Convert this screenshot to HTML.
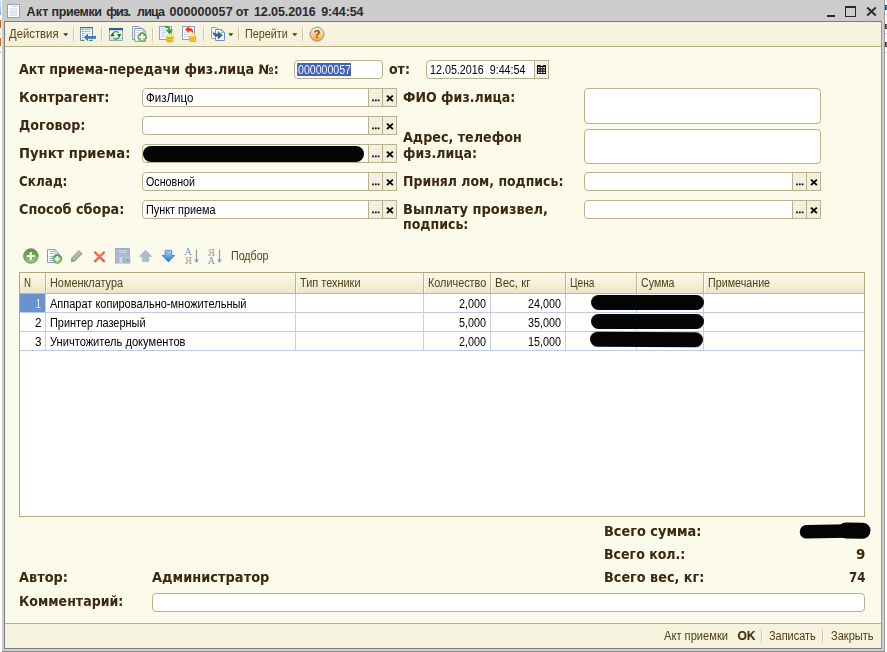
<!DOCTYPE html>
<html lang="ru"><head><meta charset="utf-8"><title>Акт приемки физ. лица</title>
<style>
*{box-sizing:border-box;margin:0;padding:0}
html,body{width:887px;height:652px;overflow:hidden;background:#fff}
body{position:relative;font-family:"Liberation Sans",sans-serif;font-size:11px;color:#000}
.a,.t,svg{position:absolute}
.t{white-space:pre;line-height:20px;height:20px}
.lb{font:bold 13.2px "DejaVu Sans",sans-serif;line-height:20px;transform-origin:0 0}
.tt{font:bold 12.5px "Liberation Sans",sans-serif;line-height:20px}
.r{font:12px "Liberation Sans",sans-serif;line-height:20px;transform-origin:0 0}
.ok{font:bold 12px "Liberation Sans",sans-serif;line-height:20px}
#frame{left:2px;top:0;width:883px;height:652px;background:#cdcdcd;border-right:1px solid #9c9c9c;border-bottom:1px solid #8c8c8c}
#inner{left:4px;top:21px;width:878px;height:628px;border:1px solid #7d7d7d;border-right-color:#9a9a9a;background:#fcfaeb}
#tb{left:5px;top:22px;width:876px;height:25px;background:linear-gradient(#f7f4e1,#f4f1db);border-bottom:1px solid #b9ae84}
#sb{left:5px;top:623px;width:876px;height:25px;background:#f5f2dd;border-top:1px solid #b9ae84}
.sep{width:2px;background:linear-gradient(rgba(205,196,158,0),#cdc49e 30%,#cdc49e 70%,rgba(205,196,158,0)) left/1px 100% no-repeat,linear-gradient(rgba(255,255,255,0),#fff 30%,#fff 70%,rgba(255,255,255,0)) right/1px 100% no-repeat}
.inp{background:#fff;border:1px solid #b9b08c;border-radius:4px;height:19px}
.bt{background:#f3f0e0;border:1px solid #b9b08c;height:19px;width:15px}
.dots{width:1px;height:1px;background:#222;box-shadow:2px 0 #222,4px 0 #222}
.dd{width:0;height:0;border-left:2.600px solid transparent;border-right:2.600px solid transparent;border-top:3px solid #4a3a12}
.blk{background:#050505;border-radius:9px;filter:blur(.45px)}
#tbl{left:19px;top:272px;width:846px;height:245px;border:1px solid #b0a782;background:#fff}
#th{left:20px;top:273px;width:844px;height:21px;background:linear-gradient(#fbf8e8,#f6f1db 50%,#ebe4c6);border-bottom:1px solid #c0b791}
.hs{top:273px;width:2px;height:20px;background:linear-gradient(90deg,#bdb48e 50%,#fffdf2 50%)}
.vs{top:294px;width:1px;height:56px;background:#c3d0e8}
.hl{left:20px;width:844px;height:1px;background:#bccbe6}
</style></head><body>
<div id="frame" class="a"></div>
<div class="a" style="left:0;top:0;width:2px;height:652px;background:#fff"></div>
<div class="a" style="left:0;top:0;width:1px;height:15px;background:linear-gradient(#cfe2f8,#7fb0ee)"></div>
<div class="a" style="left:0;top:20px;width:1px;height:8px;background:#c8641e"></div><div class="a" style="left:0;top:33px;width:1px;height:1px;background:#aaa"></div><div class="a" style="left:0;top:52px;width:1px;height:1px;background:#aaa"></div>
<div class="a" style="left:0;top:38px;width:1px;height:8px;background:#c8641e"></div>
<div class="a" style="left:885px;top:5px;width:2px;height:5px;background:#7a2a18"></div><div class="a" style="left:886px;top:6px;width:1px;height:3px;background:#3f8de8"></div><div class="a" style="left:885px;top:24px;width:2px;height:5px;background:#7a2a18"></div><div class="a" style="left:886px;top:25px;width:1px;height:3px;background:#3f8de8"></div><div class="a" style="left:885px;top:42px;width:2px;height:5px;background:#7a2a18"></div><div class="a" style="left:886px;top:43px;width:1px;height:3px;background:#3f8de8"></div><div class="a" style="left:885px;top:14px;width:2px;height:1px;background:#c9daf2"></div><div class="a" style="left:885px;top:33px;width:2px;height:1px;background:#c9daf2"></div><div class="a" style="left:885px;top:52px;width:2px;height:1px;background:#c9daf2"></div>
<div id="inner" class="a"></div>
<div id="tb" class="a"></div>
<div id="sb" class="a"></div>

<!-- title icon -->
<svg style="left:7px;top:4px" width="13" height="14" viewBox="0 0 13 14"><rect x=".5" y=".5" width="12" height="13" fill="#fdfeff" stroke="#8fa1b5"/><path d="M5.500 2.500h5M2.500 5h8M2.500 7.200h8M2.500 9.200h8M2.500 11.200h8" stroke="#bfd2e8" stroke-width="1"/></svg>
<!-- window controls -->
<div class="a" style="left:827px;top:15px;width:8px;height:2px;background:#2a2a2a"></div>
<div class="a" style="left:845px;top:6px;width:11px;height:11px;border:1px solid #2a2a2a;border-top-width:2px"></div>
<svg style="left:866px;top:6px" width="11" height="11" viewBox="0 0 11 11"><path d="M1.200 1.500l8.600 8M9.800 1.500l-8.600 8" stroke="#2a2a2a" stroke-width="1.900"/></svg>

<!-- toolbar -->
<svg style="left:62.5px;top:33px" width="6" height="4" viewBox="0 0 6 4"><path d="M.2 .3h5.200l-2.600 3z" fill="#4a3a12"/></svg>
<div class="a sep" style="left:73px;top:25px;height:19px"></div>
<div class="a sep" style="left:101px;top:25px;height:19px"></div>
<div class="a sep" style="left:152px;top:25px;height:19px"></div>
<div class="a sep" style="left:203px;top:25px;height:19px"></div>
<svg style="left:228.2px;top:33px" width="6" height="4" viewBox="0 0 6 4"><path d="M.2 .3h5.200l-2.600 3z" fill="#4a3a12"/></svg>
<div class="a sep" style="left:238px;top:25px;height:19px"></div>
<svg style="left:292px;top:33px" width="6" height="4" viewBox="0 0 6 4"><path d="M.2 .3h5.200l-2.600 3z" fill="#4a3a12"/></svg>
<div class="a sep" style="left:302px;top:25px;height:19px"></div>
<!-- tb icon1: list with arrow -->
<svg style="left:79px;top:25px" width="19" height="18" viewBox="79 25 19 18">
<path d="M80.500 40.300V27.800h12v8" fill="none" stroke="#6a93c0"/>
<rect x="81" y="28.300" width="11" height="12" fill="#fbfdff"/>
<path d="M80 27.600h13" stroke="#3b6a9c" stroke-width="1.200"/>
<path d="M80.500 40.300h4M89 40.300h3.900" stroke="#41597a" stroke-width="1"/>
<path d="M82 29.500h1.500M82 31.500h1.500M82 33.500h1.500M82 35.500h1.500M82 37.500h1" stroke="#4a8ad2"/>
<path d="M84.500 29.500h6M84.500 31.500h6M84.500 33.500h2M88.500 33.500h2" stroke="#a9b6c6"/>
<path d="M83.700 37.300l4.300-3.800v2.500h8v2.700h-8v2.600z" fill="#3579ba"/>
<path d="M88 36.300h7.800" stroke="#62a0d6" stroke-width=".6"/>
</svg>
<!-- tb icon2: refresh window -->
<svg style="left:108px;top:27px" width="16" height="15" viewBox="108 27 16 15">
<rect x="109.500" y="28.500" width="13" height="12" fill="#eef3f9" stroke="#96a8c0"/>
<rect x="110" y="37" width="12" height="3" fill="#d4e2f2"/>
<rect x="109" y="28" width="14" height="2.200" fill="#2f6093"/>
<path d="M112.800 34a3.400 3.200 0 0 1 5.800-1.300" fill="none" stroke="#4a9a3a" stroke-width="1.300"/>
<path d="M119.200 36.600a3.400 3.200 0 0 1-5.800 1.500" fill="none" stroke="#4a9a3a" stroke-width="1.300"/>
<path d="M110.200 36.300l2.300-3.500l2.300 3.500z" fill="#1d6a10"/>
<path d="M117 34l2.200 3.400l2.200-3.400z" fill="#1d6a10"/>
</svg>
<!-- tb icon3: copy plus -->
<svg style="left:131px;top:25px" width="17" height="18" viewBox="131 25 17 18">
<path d="M132.500 26.500h6.500l2 2v11h-8.500z" fill="#f3f6fb" stroke="#8c9db8"/>
<path d="M134.700 28.500h8l2.800 2.800v10h-10.800z" fill="#fbfdff" stroke="#8196b4"/>
<path d="M142.700 28.500v2.800h2.800" fill="none" stroke="#8196b4" stroke-width=".7"/>
<path d="M136.500 30.500h4.500M136.500 32.500h2" stroke="#bcc8d8"/>
<circle cx="142.200" cy="37" r="4.400" fill="url(#gg)" stroke="#85957f" stroke-width=".9"/>
<path d="M142.200 34v6M139.200 37h6" stroke="#fff" stroke-width="2.100"/>
</svg>
<!-- tb icon4: doc green arrow coins -->
<svg style="left:158px;top:25px" width="17" height="18" viewBox="158 25 17 18">
<rect x="159.500" y="26.500" width="12" height="13" fill="#f8fbfe" stroke="#86a2c6"/>
<path d="M161 28.500h4M161 30.500h5M161 32.500h5M161 34.500h4M161 36.700h4" stroke="#c3d3e6" stroke-width="1"/>
<path d="M165 26.800c2.800-.3 4.400 .8 4.500 3.400" fill="none" stroke="#3f9f30" stroke-width="2"/><path d="M165.700 29.700h7.400l-3.700 4.600z" fill="#379527"/><path d="M167.200 30.300h4.400" stroke="#6dc058" stroke-width=".6"/>
<g><ellipse cx="169.8" cy="40.85" rx="3.500" ry="1.400" fill="#e9ad18" stroke="#cf9a12" stroke-width=".4"/><ellipse cx="169.8" cy="40.3" rx="3.300" ry="1.050" fill="#ffe15a"/><ellipse cx="169.8" cy="39.25" rx="3.500" ry="1.400" fill="#e9ad18" stroke="#cf9a12" stroke-width=".4"/><ellipse cx="169.8" cy="38.7" rx="3.300" ry="1.050" fill="#ffe15a"/><ellipse cx="169.8" cy="37.65" rx="3.500" ry="1.400" fill="#e9ad18" stroke="#cf9a12" stroke-width=".4"/><ellipse cx="169.8" cy="37.1" rx="3.300" ry="1.050" fill="#ffe15a"/><ellipse cx="169.8" cy="36.15" rx="3.500" ry="1.400" fill="#e9ad18" stroke="#cf9a12" stroke-width=".4"/><ellipse cx="169.8" cy="35.7" rx="3.300" ry="1.150" fill="#fff0a0"/></g>
</svg>
<!-- tb icon5: doc red arrow coins -->
<svg style="left:181px;top:25px" width="17" height="18" viewBox="181 25 17 18">
<rect x="182.500" y="26.500" width="12" height="13" fill="#f8fbfe" stroke="#86a2c6"/>
<path d="M184 32.500h2.500M184 34.500h5M184 36.700h5" stroke="#c3d3e6" stroke-width="1"/>
<path d="M185 29.300l3.900-3.300v2.100c3.300-.1 4.800 2 4.200 5.700c-.7-2-1.900-2.800-4.200-2.700v2.100z" fill="#e83a22"/>
<path d="M186.200 29.200l2.400-2" stroke="#f58a78" stroke-width=".6"/>
<g><ellipse cx="192.7" cy="40.55" rx="3.500" ry="1.400" fill="#e9ad18" stroke="#cf9a12" stroke-width=".4"/><ellipse cx="192.7" cy="40" rx="3.300" ry="1.050" fill="#ffe15a"/><ellipse cx="192.7" cy="38.95" rx="3.500" ry="1.400" fill="#e9ad18" stroke="#cf9a12" stroke-width=".4"/><ellipse cx="192.7" cy="38.4" rx="3.300" ry="1.050" fill="#ffe15a"/><ellipse cx="192.7" cy="37.35" rx="3.500" ry="1.400" fill="#e9ad18" stroke="#cf9a12" stroke-width=".4"/><ellipse cx="192.7" cy="36.8" rx="3.300" ry="1.050" fill="#ffe15a"/><ellipse cx="192.7" cy="35.85" rx="3.500" ry="1.400" fill="#e9ad18" stroke="#cf9a12" stroke-width=".4"/><ellipse cx="192.7" cy="35.4" rx="3.300" ry="1.150" fill="#fff0a0"/></g>
</svg>
<!-- tb icon6: docs with blue arrow -->
<svg style="left:210px;top:26px" width="16" height="16" viewBox="210 26 16 16">
<path d="M211.500 27.500h5.200l2 2v9h-7.200z" fill="#f4f6f9" stroke="#a2a4a8"/>
<path d="M215.500 29.500h6l3 3v8h-9z" fill="#f6f9fd" stroke="#7590b2"/>
<path d="M221.500 29.500v3h3" fill="none" stroke="#7590b2" stroke-width=".7"/>
<path d="M212.600 30.800c.6 2.300 2.300 3 5.300 3v-2.800l4.900 4.200l-4.900 4.200v-2.700c-3.500.1-5.200-1.900-5.300-5.900z" fill="#2a639c"/>
<path d="M218.400 32.300l3.300 2.900" stroke="#5a9ad0" stroke-width=".7"/>
</svg>
<!-- help -->
<svg style="left:309px;top:26px" width="16" height="16" viewBox="0 0 16 16">
<defs><linearGradient id="hg" x1="0" y1="0" x2="0" y2="1"><stop offset="0" stop-color="#fdf3e0"/><stop offset=".45" stop-color="#f9d595"/><stop offset="1" stop-color="#f2a52a"/></linearGradient></defs>
<circle cx="8" cy="8.200" r="7" fill="url(#hg)" stroke="#9296a6" stroke-width="1"/>
<text x="8.100" y="12.300" text-anchor="middle" font-family="Liberation Sans,sans-serif" font-weight="bold" font-size="11.500" fill="#8a4d1e">?</text>
</svg>

<!-- table toolbar icons -->
<svg style="left:23px;top:247px" width="17" height="17" viewBox="0 0 17 17">
<defs><linearGradient id="gg" x1="0" y1="0" x2="0" y2="1"><stop offset="0" stop-color="#4f9f36"/><stop offset=".5" stop-color="#66b24c"/><stop offset="1" stop-color="#9ad87e"/></linearGradient></defs>
<circle cx="7.900" cy="9" r="7.200" fill="url(#gg)" stroke="#70826c" stroke-width="1"/>
<path d="M7.800 5v8M3.800 9h8" stroke="#fff" stroke-width="2.200"/>
</svg>
<svg style="left:47px;top:249px" width="16" height="15" viewBox="0 0 16 15">
<path d="M.5 .5h7.500l3.500 3.500v9.500h-11z" fill="#f9fbfe" stroke="#7f9cc0"/><path d="M8 .5v3.500h3.500" fill="none" stroke="#7f9cc0" stroke-width=".7"/>
<path d="M2.500 2.500h4.500M2.500 4.500h4.500M2.500 7.500h5.500M2.500 9.500h3M2.500 11.500h3" stroke="#9db3cf"/>
<circle cx="10.300" cy="9.800" r="4.500" fill="url(#gg)" stroke="#7d8f79" stroke-width=".9"/>
<path d="M10.300 7v5.600M7.500 9.800h5.600" stroke="#fff" stroke-width="1.900"/>
</svg>
<svg style="left:70px;top:249px" width="14" height="14" viewBox="70 249 14 14">
<path d="M71 262.200l.4-4.500l7.500-7.600l3.800 3.600l-7.500 7.600z" fill="#9fb09c"/>
<path d="M72.800 259.600l7-7.100" stroke="#b7c5b4" stroke-width="1.200"/>
<path d="M71 262.200l.4-4.500l3.800 3.600z" fill="#8fa38c"/>
</svg>
<svg style="left:93px;top:250px" width="13" height="13" viewBox="0 0 13 13">
<path d="M2.200 2.500l8.600 8.600M10.800 2.500l-8.600 8.600" stroke="#df5546" stroke-width="2.400" stroke-linecap="round"/><path d="M3 3.300l7 7M10 3.300l-7 7" stroke="#f19c8f" stroke-width=".9" stroke-linecap="round"/>
</svg>
<svg style="left:115px;top:248px" width="16" height="16" viewBox="115 248 16 16">
<rect x="115.500" y="248.500" width="14" height="14.500" fill="#adbbd1" stroke="#9db0cb"/>
<rect x="118.500" y="249.500" width="8.500" height="4" fill="#c8d4e4" stroke="#9bb0cc" stroke-width=".7"/>
<path d="M119 251.500h7.500" stroke="#a9bbd3" stroke-width=".7"/>
<rect x="119.500" y="257" width="11" height="6.300" fill="#c0cde0"/>
<rect x="120" y="258" width="2.200" height="4.500" fill="#d3dceb"/>
<text x="122.600" y="262.700" font-family="Liberation Sans,sans-serif" font-weight="bold" font-size="6.500" fill="#7d94b6" textLength="7.600" lengthAdjust="spacingAndGlyphs">OK</text>
</svg>
<svg style="left:138px;top:249px" width="15" height="14" viewBox="138 249 15 14">
<path d="M145.550 250l6.300 6.600h-3v4.600q0 .6-.6 .6h-5.400q-.6 0-.6-.6v-4.600h-3z" fill="#adb8c6" stroke="#a3afbe" stroke-width=".5"/>
<path d="M143.500 257v4M145.500 253v8" stroke="#b8c2cf" stroke-width="1"/>
</svg>
<svg style="left:161px;top:249px" width="15" height="14" viewBox="161 249 15 14">
<defs><linearGradient id="bg" x1="0" y1="0" x2="0" y2="1"><stop offset="0" stop-color="#a6d3f7"/><stop offset=".5" stop-color="#5ba9ea"/><stop offset="1" stop-color="#2b72c4"/></linearGradient></defs>
<path d="M168.400 261.900l-6.300-6.500h3v-4.500q0-.6 .6-.6h5.400q.6 0 .6 .6v4.500h3z" fill="url(#bg)" stroke="#35679f" stroke-width=".7"/>
</svg>
<svg style="left:184px;top:247px" width="17" height="18" viewBox="0 0 17 18">
<text x=".3" y="8.300" font-family="Liberation Serif,serif" font-size="10.500" fill="#8599ae">А</text>
<text x="1" y="17" font-family="Liberation Serif,serif" font-size="10.500" fill="#ad9797">Я</text>
<path d="M12.500 2.500v12" stroke="#8aa0b8" stroke-width="1.200"/><path d="M10 12.500h5l-2.500 3.500z" fill="#8aa0b8"/>
</svg>
<svg style="left:207px;top:247px" width="17" height="18" viewBox="0 0 17 18">
<text x="1" y="8.500" font-family="Liberation Serif,serif" font-size="10.500" fill="#ad9797">Я</text>
<text x=".5" y="17" font-family="Liberation Serif,serif" font-size="10.500" fill="#8599ae">А</text>
<path d="M12.500 2.500v12" stroke="#8aa0b8" stroke-width="1.200"/><path d="M10 12.500h5l-2.500 3.500z" fill="#8aa0b8"/>
</svg>


<!-- inputs -->
<div class="a inp" style="left:294px;top:60px;width:89px"></div>
<div class="a" style="left:297px;top:63px;width:54px;height:13px;background:#4363b6"></div><div class="a" style="left:297px;top:63px;width:1px;height:13px;background:#a8642a"></div>
<div class="a inp" style="left:426px;top:60px;width:123px"></div>
<div class="a bt" style="left:534px;top:60px"></div>
<svg style="left:537px;top:65px" width="9" height="9" viewBox="0 0 9 9"><rect width="9" height="9" fill="#0a0a0a"/><path d="M1 2h1.700v1.200h-1.700zM1 4.4h1.700v1.200h-1.700zM1 6.7h1.700v1.200h-1.700zM3.7 2h1.700v1.200h-1.700zM3.7 4.4h1.700v1.200h-1.700zM3.7 6.7h1.700v1.200h-1.700zM6.3 2h1.700v1.200h-1.700zM6.3 4.4h1.700v1.200h-1.700zM6.3 6.7h1.700v1.200h-1.700z" fill="#fff"/><rect x="3.500" y="0" width="2.500" height="1" fill="#bbb"/></svg>

<div class="a inp" style="left:142px;top:88px;width:255px"></div>
<div class="a bt" style="left:368px;top:88px"></div>
<div class="a bt" style="left:382px;top:88px"></div>
<svg style="left:372px;top:99px" width="9" height="3" viewBox="0 0 9 3"><path d="M.1 .4h1.800v1.800h-1.800zM2.900 .4h1.800v1.800h-1.800zM5.700 .4h1.800v1.800h-1.800z" fill="#111"/></svg>
<svg style="left:386px;top:95px" width="8" height="7" viewBox="0 0 8 7"><path d="M.9 .6l6 5.500M6.900 .6l-6 5.500" stroke="#0a0a0a" stroke-width="1.900"/></svg>
<div class="a inp" style="left:142px;top:116px;width:255px"></div>
<div class="a bt" style="left:368px;top:116px"></div>
<div class="a bt" style="left:382px;top:116px"></div>
<svg style="left:372px;top:127px" width="9" height="3" viewBox="0 0 9 3"><path d="M.1 .4h1.800v1.800h-1.800zM2.900 .4h1.800v1.800h-1.800zM5.700 .4h1.800v1.800h-1.800z" fill="#111"/></svg>
<svg style="left:386px;top:123px" width="8" height="7" viewBox="0 0 8 7"><path d="M.9 .6l6 5.500M6.900 .6l-6 5.500" stroke="#0a0a0a" stroke-width="1.900"/></svg>
<div class="a inp" style="left:142px;top:144px;width:255px"></div>
<div class="a bt" style="left:368px;top:144px"></div>
<div class="a bt" style="left:382px;top:144px"></div>
<svg style="left:372px;top:155px" width="9" height="3" viewBox="0 0 9 3"><path d="M.1 .4h1.800v1.800h-1.800zM2.900 .4h1.800v1.800h-1.800zM5.700 .4h1.800v1.800h-1.800z" fill="#111"/></svg>
<svg style="left:386px;top:151px" width="8" height="7" viewBox="0 0 8 7"><path d="M.9 .6l6 5.500M6.900 .6l-6 5.500" stroke="#0a0a0a" stroke-width="1.900"/></svg>
<div class="a inp" style="left:142px;top:172px;width:255px"></div>
<div class="a bt" style="left:368px;top:172px"></div>
<div class="a bt" style="left:382px;top:172px"></div>
<svg style="left:372px;top:183px" width="9" height="3" viewBox="0 0 9 3"><path d="M.1 .4h1.800v1.800h-1.800zM2.900 .4h1.800v1.800h-1.800zM5.700 .4h1.800v1.800h-1.800z" fill="#111"/></svg>
<svg style="left:386px;top:179px" width="8" height="7" viewBox="0 0 8 7"><path d="M.9 .6l6 5.500M6.900 .6l-6 5.500" stroke="#0a0a0a" stroke-width="1.900"/></svg>
<div class="a inp" style="left:142px;top:200px;width:255px"></div>
<div class="a bt" style="left:368px;top:200px"></div>
<div class="a bt" style="left:382px;top:200px"></div>
<svg style="left:372px;top:211px" width="9" height="3" viewBox="0 0 9 3"><path d="M.1 .4h1.800v1.800h-1.800zM2.900 .4h1.800v1.800h-1.800zM5.700 .4h1.800v1.800h-1.800z" fill="#111"/></svg>
<svg style="left:386px;top:207px" width="8" height="7" viewBox="0 0 8 7"><path d="M.9 .6l6 5.500M6.900 .6l-6 5.500" stroke="#0a0a0a" stroke-width="1.900"/></svg>
<div class="a inp" style="left:584px;top:172px;width:237px"></div>
<div class="a bt" style="left:792px;top:172px"></div>
<div class="a bt" style="left:806px;top:172px"></div>
<svg style="left:796px;top:183px" width="9" height="3" viewBox="0 0 9 3"><path d="M.1 .4h1.800v1.800h-1.800zM2.900 .4h1.800v1.800h-1.800zM5.700 .4h1.800v1.800h-1.800z" fill="#111"/></svg>
<svg style="left:810px;top:179px" width="8" height="7" viewBox="0 0 8 7"><path d="M.9 .6l6 5.500M6.900 .6l-6 5.500" stroke="#0a0a0a" stroke-width="1.900"/></svg>
<div class="a inp" style="left:584px;top:200px;width:237px"></div>
<div class="a bt" style="left:792px;top:200px"></div>
<div class="a bt" style="left:806px;top:200px"></div>
<svg style="left:796px;top:211px" width="9" height="3" viewBox="0 0 9 3"><path d="M.1 .4h1.800v1.800h-1.800zM2.900 .4h1.800v1.800h-1.800zM5.700 .4h1.800v1.800h-1.800z" fill="#111"/></svg>
<svg style="left:810px;top:207px" width="8" height="7" viewBox="0 0 8 7"><path d="M.9 .6l6 5.500M6.900 .6l-6 5.500" stroke="#0a0a0a" stroke-width="1.900"/></svg>

<div class="a inp" style="left:584px;top:88px;width:237px;height:36px"></div>
<div class="a inp" style="left:584px;top:129px;width:237px;height:35px"></div>
<div class="a inp" style="left:152px;top:593px;width:713px"></div>

<!-- blackouts -->
<div class="a blk" style="left:143px;top:146px;width:220.500px;height:16px"></div>
<svg style="left:796px;top:519px" width="78" height="24" viewBox="0 0 78 24"><path d="M10.500 12.800L66 11.800" stroke="#050505" stroke-width="13.500" stroke-linecap="round" fill="none"/><path d="M50 11.500L66.500 11.700" stroke="#050505" stroke-width="16" stroke-linecap="round" fill="none"/></svg>

<!-- table -->
<div id="tbl" class="a"></div>
<div id="th" class="a"></div>
<div class="a hs" style="left:45px"></div>
<div class="a vs" style="left:45px"></div>
<div class="a hs" style="left:295px"></div>
<div class="a vs" style="left:295px"></div>
<div class="a hs" style="left:423px"></div>
<div class="a vs" style="left:423px"></div>
<div class="a hs" style="left:490px"></div>
<div class="a vs" style="left:490px"></div>
<div class="a hs" style="left:565px"></div>
<div class="a vs" style="left:565px"></div>
<div class="a hs" style="left:636px"></div>
<div class="a vs" style="left:636px"></div>
<div class="a hs" style="left:703px"></div>
<div class="a vs" style="left:703px"></div>
<div class="a hl" style="top:312px"></div>
<div class="a hl" style="top:331px"></div>
<div class="a hl" style="top:350px"></div>
<div class="a" style="left:20px;top:294px;width:25px;height:18px;background:#6a92ce"></div>
<div class="a blk" style="left:591.4px;top:294.700px;width:112.500px;height:15.600px"></div>
<div class="a blk" style="left:591.4px;top:314.200px;width:112.300px;height:15px"></div>
<div class="a blk" style="left:590.3px;top:331.700px;width:112.700px;height:15.400px;transform:rotate(.3deg)"></div>

<!-- status bar seps -->
<div class="a sep" style="left:761px;top:627px;height:18px"></div>
<div class="a sep" style="left:822px;top:627px;height:18px"></div>

<div class="t tt" style="left:26.6px;top:2px;letter-spacing:0.197px;color:#2b2b2b;">Акт</div>
<div class="t tt" style="left:51.5px;top:2px;letter-spacing:-0.393px;color:#2b2b2b;">приемки</div>
<div class="t tt" style="left:106.3px;top:2px;letter-spacing:-1.204px;color:#2b2b2b;">физ.</div>
<div class="t tt" style="left:137.1px;top:2px;letter-spacing:-0.841px;color:#2b2b2b;">лица</div>
<div class="t tt" style="left:169.5px;top:2px;letter-spacing:0.065px;color:#2b2b2b;">000000057</div>
<div class="t tt" style="left:235.7px;top:2px;letter-spacing:-0.353px;color:#2b2b2b;">от</div>
<div class="t tt" style="left:254px;top:2px;letter-spacing:-0.085px;color:#2b2b2b;">12.05.2016</div>
<div class="t tt" style="left:321.3px;top:2px;letter-spacing:-0.166px;color:#2b2b2b;">9:44:54</div>
<div class="t r" style="left:8.5px;top:24px;transform:scaleX(0.9415);color:#5a4515;">Действия</div>
<div class="t r" style="left:244.5px;top:24px;transform:scaleX(0.8999);color:#5a4515;">Перейти</div>
<div class="t lb" style="left:18.8px;top:60px;transform:scaleX(0.9609);color:#3a2810;">Акт приема-передачи физ.лица №:</div>
<div class="t lb" style="left:18.8px;top:88px;transform:scaleX(0.9742);color:#3a2810;">Контрагент:</div>
<div class="t lb" style="left:18.8px;top:116px;transform:scaleX(0.9641);color:#3a2810;">Договор:</div>
<div class="t lb" style="left:18.8px;top:144px;transform:scaleX(0.9980);color:#3a2810;">Пункт приема:</div>
<div class="t lb" style="left:18.8px;top:172px;transform:scaleX(0.9111);color:#3a2810;">Склад:</div>
<div class="t lb" style="left:18.8px;top:200px;transform:scaleX(0.9738);color:#3a2810;">Способ сбора:</div>
<div class="t lb" style="left:388.8px;top:60px;transform:scaleX(0.9507);color:#3a2810;">от:</div>
<div class="t lb" style="left:402.8px;top:88px;transform:scaleX(0.9544);color:#3a2810;">ФИО физ.лица:</div>
<div class="t lb" style="left:402.8px;top:128px;transform:scaleX(0.9658);color:#3a2810;">Адрес, телефон</div>
<div class="t lb" style="left:402.8px;top:144px;transform:scaleX(0.9506);color:#3a2810;">физ.лица:</div>
<div class="t lb" style="left:402.8px;top:172px;transform:scaleX(0.9477);color:#3a2810;">Принял лом, подпись:</div>
<div class="t lb" style="left:402.8px;top:200px;transform:scaleX(0.9867);color:#3a2810;">Выплату произвел,</div>
<div class="t lb" style="left:402.8px;top:215px;transform:scaleX(0.9532);color:#3a2810;">подпись:</div>
<div class="t lb" style="left:18.8px;top:568px;transform:scaleX(0.9786);color:#3a2810;">Автор:</div>
<div class="t lb" style="left:151.8px;top:568px;transform:scaleX(0.9851);color:#3a2810;">Администратор</div>
<div class="t lb" style="left:18.8px;top:592px;transform:scaleX(0.9560);color:#3a2810;">Комментарий:</div>
<div class="t lb" style="left:603.8px;top:522px;transform:scaleX(0.9789);color:#3a2810;">Всего сумма:</div>
<div class="t lb" style="left:603.8px;top:545px;transform:scaleX(0.9541);color:#3a2810;">Всего кол.:</div>
<div class="t lb" style="left:603.8px;top:568px;transform:scaleX(0.9730);color:#3a2810;">Всего вес, кг:</div>
<div class="t lb" style="left:855.8px;top:545px;transform:scaleX(1.0231);color:#3a2810;">9</div>
<div class="t lb" style="left:848.8px;top:568px;transform:scaleX(0.8933);color:#3a2810;">74</div>
<div class="t r" style="left:297.5px;top:60px;transform:scaleX(0.8822);color:#f0f4ff;">000000057</div>
<div class="t r" style="left:429.5px;top:60px;transform:scaleX(0.8945);color:#000;">12.05.2016  9:44:54</div>
<div class="t r" style="left:145.5px;top:88px;transform:scaleX(0.9629);">ФизЛицо</div>
<div class="t r" style="left:145.5px;top:172px;transform:scaleX(0.8907);">Основной</div>
<div class="t r" style="left:145.5px;top:200px;transform:scaleX(0.9031);">Пункт приема</div>
<div class="t r" style="left:230.5px;top:246px;transform:scaleX(0.8872);color:#4f4019;">Подбор</div>
<div class="t r" style="left:24px;top:273px;transform:scaleX(0.8072);color:#4f4019;">N</div>
<div class="t r" style="left:50px;top:273px;transform:scaleX(0.9065);color:#4f4019;">Номенклатура</div>
<div class="t r" style="left:300px;top:273px;transform:scaleX(0.9111);color:#4f4019;">Тип техники</div>
<div class="t r" style="left:427.5px;top:273px;transform:scaleX(0.9038);color:#4f4019;">Количество</div>
<div class="t r" style="left:494.5px;top:273px;transform:scaleX(0.9599);color:#4f4019;">Вес, кг</div>
<div class="t r" style="left:570px;top:273px;transform:scaleX(0.8489);color:#4f4019;">Цена</div>
<div class="t r" style="left:640.5px;top:273px;transform:scaleX(0.8882);color:#4f4019;">Сумма</div>
<div class="t r" style="left:707.5px;top:273px;transform:scaleX(0.8939);color:#4f4019;">Примечание</div>
<div class="t r" style="left:36.2px;top:294px;transform:scaleX(0.7178);color:#fff;">1</div>
<div class="t r" style="left:34.5px;top:313px;transform:scaleX(0.9720);">2</div>
<div class="t r" style="left:34.5px;top:332px;transform:scaleX(0.9720);">3</div>
<div class="t r" style="left:49.5px;top:294px;transform:scaleX(0.9154);">Аппарат копировально-множительный</div>
<div class="t r" style="left:49.5px;top:313px;transform:scaleX(0.9105);">Принтер лазерный</div>
<div class="t r" style="left:49.5px;top:332px;transform:scaleX(0.9254);">Уничтожитель документов</div>
<div class="t r" style="left:459px;top:294px;transform:scaleX(0.8991);">2,000</div>
<div class="t r" style="left:459px;top:313px;transform:scaleX(0.8991);">5,000</div>
<div class="t r" style="left:459px;top:332px;transform:scaleX(0.8991);">2,000</div>
<div class="t r" style="left:527.5px;top:294px;transform:scaleX(0.8991);">24,000</div>
<div class="t r" style="left:527.5px;top:313px;transform:scaleX(0.8991);">35,000</div>
<div class="t r" style="left:527.5px;top:332px;transform:scaleX(0.8991);">15,000</div>
<div class="t r" style="left:663.5px;top:626px;transform:scaleX(0.9277);color:#4f4019;">Акт приемки</div>
<div class="t ok" style="left:737.5px;top:626px;color:#3a2f10;">OK</div>
<div class="t r" style="left:769px;top:626px;transform:scaleX(0.9116);color:#4f4019;">Записать</div>
<div class="t r" style="left:831px;top:626px;transform:scaleX(0.9195);color:#4f4019;">Закрыть</div>
</body></html>
